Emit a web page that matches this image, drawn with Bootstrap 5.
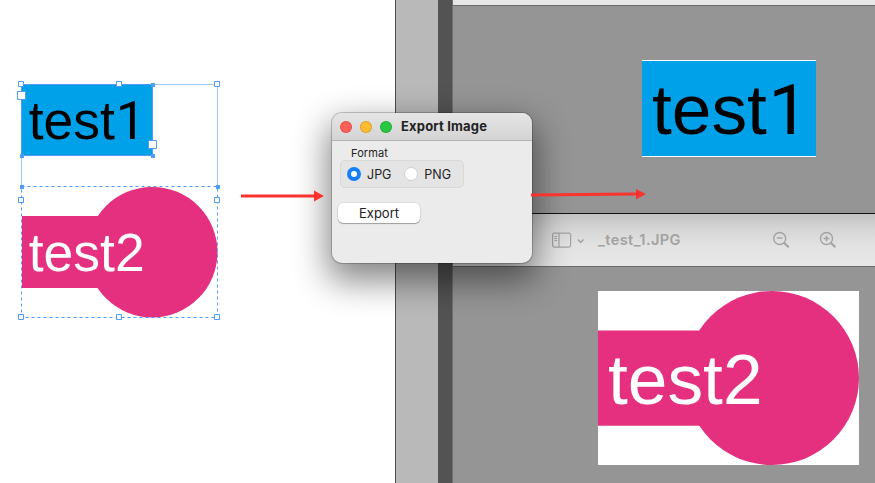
<!DOCTYPE html>
<html lang="en">
<head>
<meta charset="utf-8">
<meta name="viewport" content="width=device-width, initial-scale=1">
<title>Export Image</title>
<link href="https://cdn.jsdelivr.net/npm/bootstrap@5.3.0/dist/css/bootstrap.min.css" rel="stylesheet">
<style>
body{width:875px;height:483px;overflow:hidden;background:#fff;font-family:Inter,"Liberation Sans",sans-serif}
svg{display:block;flex:none}
.art{font-family:"Liberation Sans",Arial,sans-serif}
.digit{font-family:Roboto,sans-serif}
.artboard{width:395px}
.scroller{width:43px;background:#b9b9b9;border-left:1px solid #4b4b4b}
.splitter{width:14px;background:#535353}
.viewers{background:#959595;border-left:1px solid #707070}
.topbar{height:6px;background:#e6e6e6;border-bottom:1px solid #6c6c6c}
.upper{height:207px;padding:54px 0 0 189px}
.viewbar{height:54px;border-top:1px solid #111;border-bottom:1px solid #6c6c6c;background:linear-gradient(#c3c3c3,#d6d6d6 30%,#e3e3e3 62%,#e7e7e7);padding-left:99px;color:#a2a2a2}
.filename{font-size:14.6px;letter-spacing:.4px;font-weight:600;width:86px;margin-left:13px;white-space:nowrap;line-height:20px}
.zoom-tools{margin-right:39px}
.lower{padding:24px 0 0 145px}
.dialog-win{left:332px;top:113px;width:200px;height:150px;border-radius:10px;background:#ebebeb;box-shadow:0 0 0 1px rgba(0,0,0,.2),0 14px 34px 4px rgba(0,0,0,.48);color:#222}
.titlebar{height:28px;border-bottom:1px solid #b5b5b5;border-radius:10px 10px 0 0;background:linear-gradient(#e5e5e5,#d4d4d4);padding-left:8px}
.dot{width:12px;height:12px;border-radius:50%;border:1px solid rgba(0,0,0,.14);margin-right:8px}
.dot-close{background:#ff5f57}
.dot-min{background:#febc2e}
.dot-max{background:#28c840}
.title-text{font-size:13px;letter-spacing:.17px;font-weight:700;margin-left:1px;white-space:nowrap}
.format-label{font-size:11px;letter-spacing:.1px;line-height:14px;margin:5px 0 0 19px}
.format-box{width:124px;height:28px;margin:0 0 0 8px;border:1px solid #d9d9d9;border-radius:5px;background:#e4e4e4;font-size:12.5px;padding-left:6px}
.format-box .form-check-input{width:14px;height:14px;margin:0;border:1px solid #d0d0d0;box-shadow:none;background-image:none;background-color:#fff}
.format-box .form-check-input:checked{border:4px solid #147efb}
.format-box label{margin-left:6px;line-height:16px;padding-top:1px}
.btn.export-btn{width:82px;height:20px;margin:15px 0 0 6px;padding:0;border:0;border-radius:5px;background:#fff;color:#222;font-size:13px;line-height:19px;box-shadow:0 0 0 .5px rgba(0,0,0,.12),0 1px 1px rgba(0,0,0,.28)}
.arrows{left:0;top:0;pointer-events:none}
</style>
<script src="https://cdn.jsdelivr.net/npm/bootstrap@5.3.0/dist/js/bootstrap.bundle.min.js"></script>
</head>
<body class="position-relative">
<main class="d-flex h-100">
  <section class="artboard flex-shrink-0">
    <svg class="art" width="395" height="483" viewBox="0 0 395 483">
      <rect x="22" y="85" width="131" height="71" fill="#00a1e9"/>
      <path d="M22 216H110V288H22Z" fill="#e53080"/>
      <circle cx="152.2" cy="252.2" r="65.3" fill="#e53080"/>
      <text x="28.7" y="139" font-size="53.5">test<tspan class="digit" x="115.7">1</tspan></text>
      <text x="28.7" y="271" font-size="53.5" fill="#fff">test2</text>
      <g fill="none" stroke="#4f9dfa">
        <path d="M21.5 186V84.5H217.5V186" stroke="#9cc7fa"/>
        <rect x="21.5" y="84.5" width="131" height="71"/>
        <path d="M21.5 186.5H217.5V317.5H21.5Z" stroke-dasharray="3 3"/>
      </g>
      <g fill="#4f9dfa">
        <path d="M151 83h4v4h-4zM20 154h4v4h-4zM151 154h4v4h-4zM20 185h4v4h-4zM216 185h4v4h-4z"/>
      </g>
      <g fill="#fff" stroke="#4f9dfa">
        <path d="M18.500 81.500h5v5h-5zM116.500 81.500h5v5h-5zM214.500 81.500h5v5h-5zM18.500 197.500h5v5h-5zM214.500 197.500h5v5h-5zM18.500 314.500h5v5h-5zM116.500 314.500h5v5h-5zM214.500 314.500h5v5h-5z"/>
        <path d="M17.500 91.500h8v8h-8zM148.500 140.500h8v8h-8z"/>
      </g>
    </svg>
  </section>
  <div class="scroller flex-shrink-0"></div>
  <div class="splitter flex-shrink-0"></div>
  <section class="viewers flex-grow-1 d-flex flex-column">
    <div class="topbar flex-shrink-0"></div>
    <div class="upper flex-shrink-0">
      <svg class="art" width="174" height="97" viewBox="0 0 174 97">
        <rect width="174" height="97" fill="#fff"/>
        <rect y="1" width="174" height="95" fill="#00a1e9"/>
        <text x="10" y="74" font-size="71.300">test<tspan class="digit" x="126.500">1</tspan></text>
      </svg>
    </div>
    <header class="viewbar flex-shrink-0 d-flex align-items-center">
      <svg width="33" height="16" viewBox="0 0 33 16" fill="none" stroke="currentColor" stroke-width="1.200">
        <rect x=".6" y="1.100" width="18" height="14" rx="1.800"/><path d="M7 1v14M2.500 4.500h2.500M2.500 6.500h2.500M2.500 8.500h2.500"/>
        <path d="m26 7.500 2.700 3L31.500 7.500" stroke-width="1.500"/>
      </svg>
      <span class="filename">_test_1.JPG</span>
      <svg class="zoom-tools ms-auto" width="63" height="18" viewBox="0 0 63 18" fill="none" stroke="currentColor" stroke-width="1.400">
        <circle cx="6.700" cy="7.500" r="6"/><path d="M3.900 7h5.600"/><path d="m11 11.800 4.700 4.500" stroke-width="2"/>
        <circle cx="53.500" cy="7.500" r="6"/><path d="M50.700 7.500h5.600M53.500 4.700v5.600"/><path d="m57.800 11.800 4.500 4.500" stroke-width="2"/>
      </svg>
    </header>
    <div class="lower">
      <svg class="art" width="261" height="174" viewBox="0 0 261 174">
        <rect width="261" height="174" fill="#fff"/>
        <path d="M0 39.500H120V134.800H0Z" fill="#e53080"/>
        <circle cx="174" cy="87" r="87" fill="#e53080"/>
        <text x="10" y="113" font-size="71.300" fill="#fff">test2</text>
      </svg>
    </div>
  </section>
</main>

<section class="dialog-win position-absolute">
  <div class="titlebar d-flex align-items-center">
    <span class="dot dot-close"></span>
    <span class="dot dot-min"></span>
    <span class="dot dot-max"></span>
    <span class="title-text">Export Image</span>
  </div>
  <div class="format-label">Format</div>
  <div class="format-box d-flex align-items-center">
    <input class="form-check-input" type="radio" name="format" id="jpg" checked>
    <label for="jpg">JPG</label>
    <input class="form-check-input ms-auto" type="radio" name="format" id="png">
    <label for="png" class="me-2 pe-1">PNG</label>
  </div>
  <button class="btn export-btn d-block" type="button">Export</button>
</section>

<svg class="arrows position-absolute" width="875" height="483" viewBox="0 0 875 483" fill="#fb332e">
  <path d="M241 194.500H314V190.500L324 196L314 201.500V197.500H241Z"/>
  <path d="M531 193.500L636 192.500V189L646 194L636 199.500V195.500L531 196.500Z"/>
</svg>
</body>
</html>
